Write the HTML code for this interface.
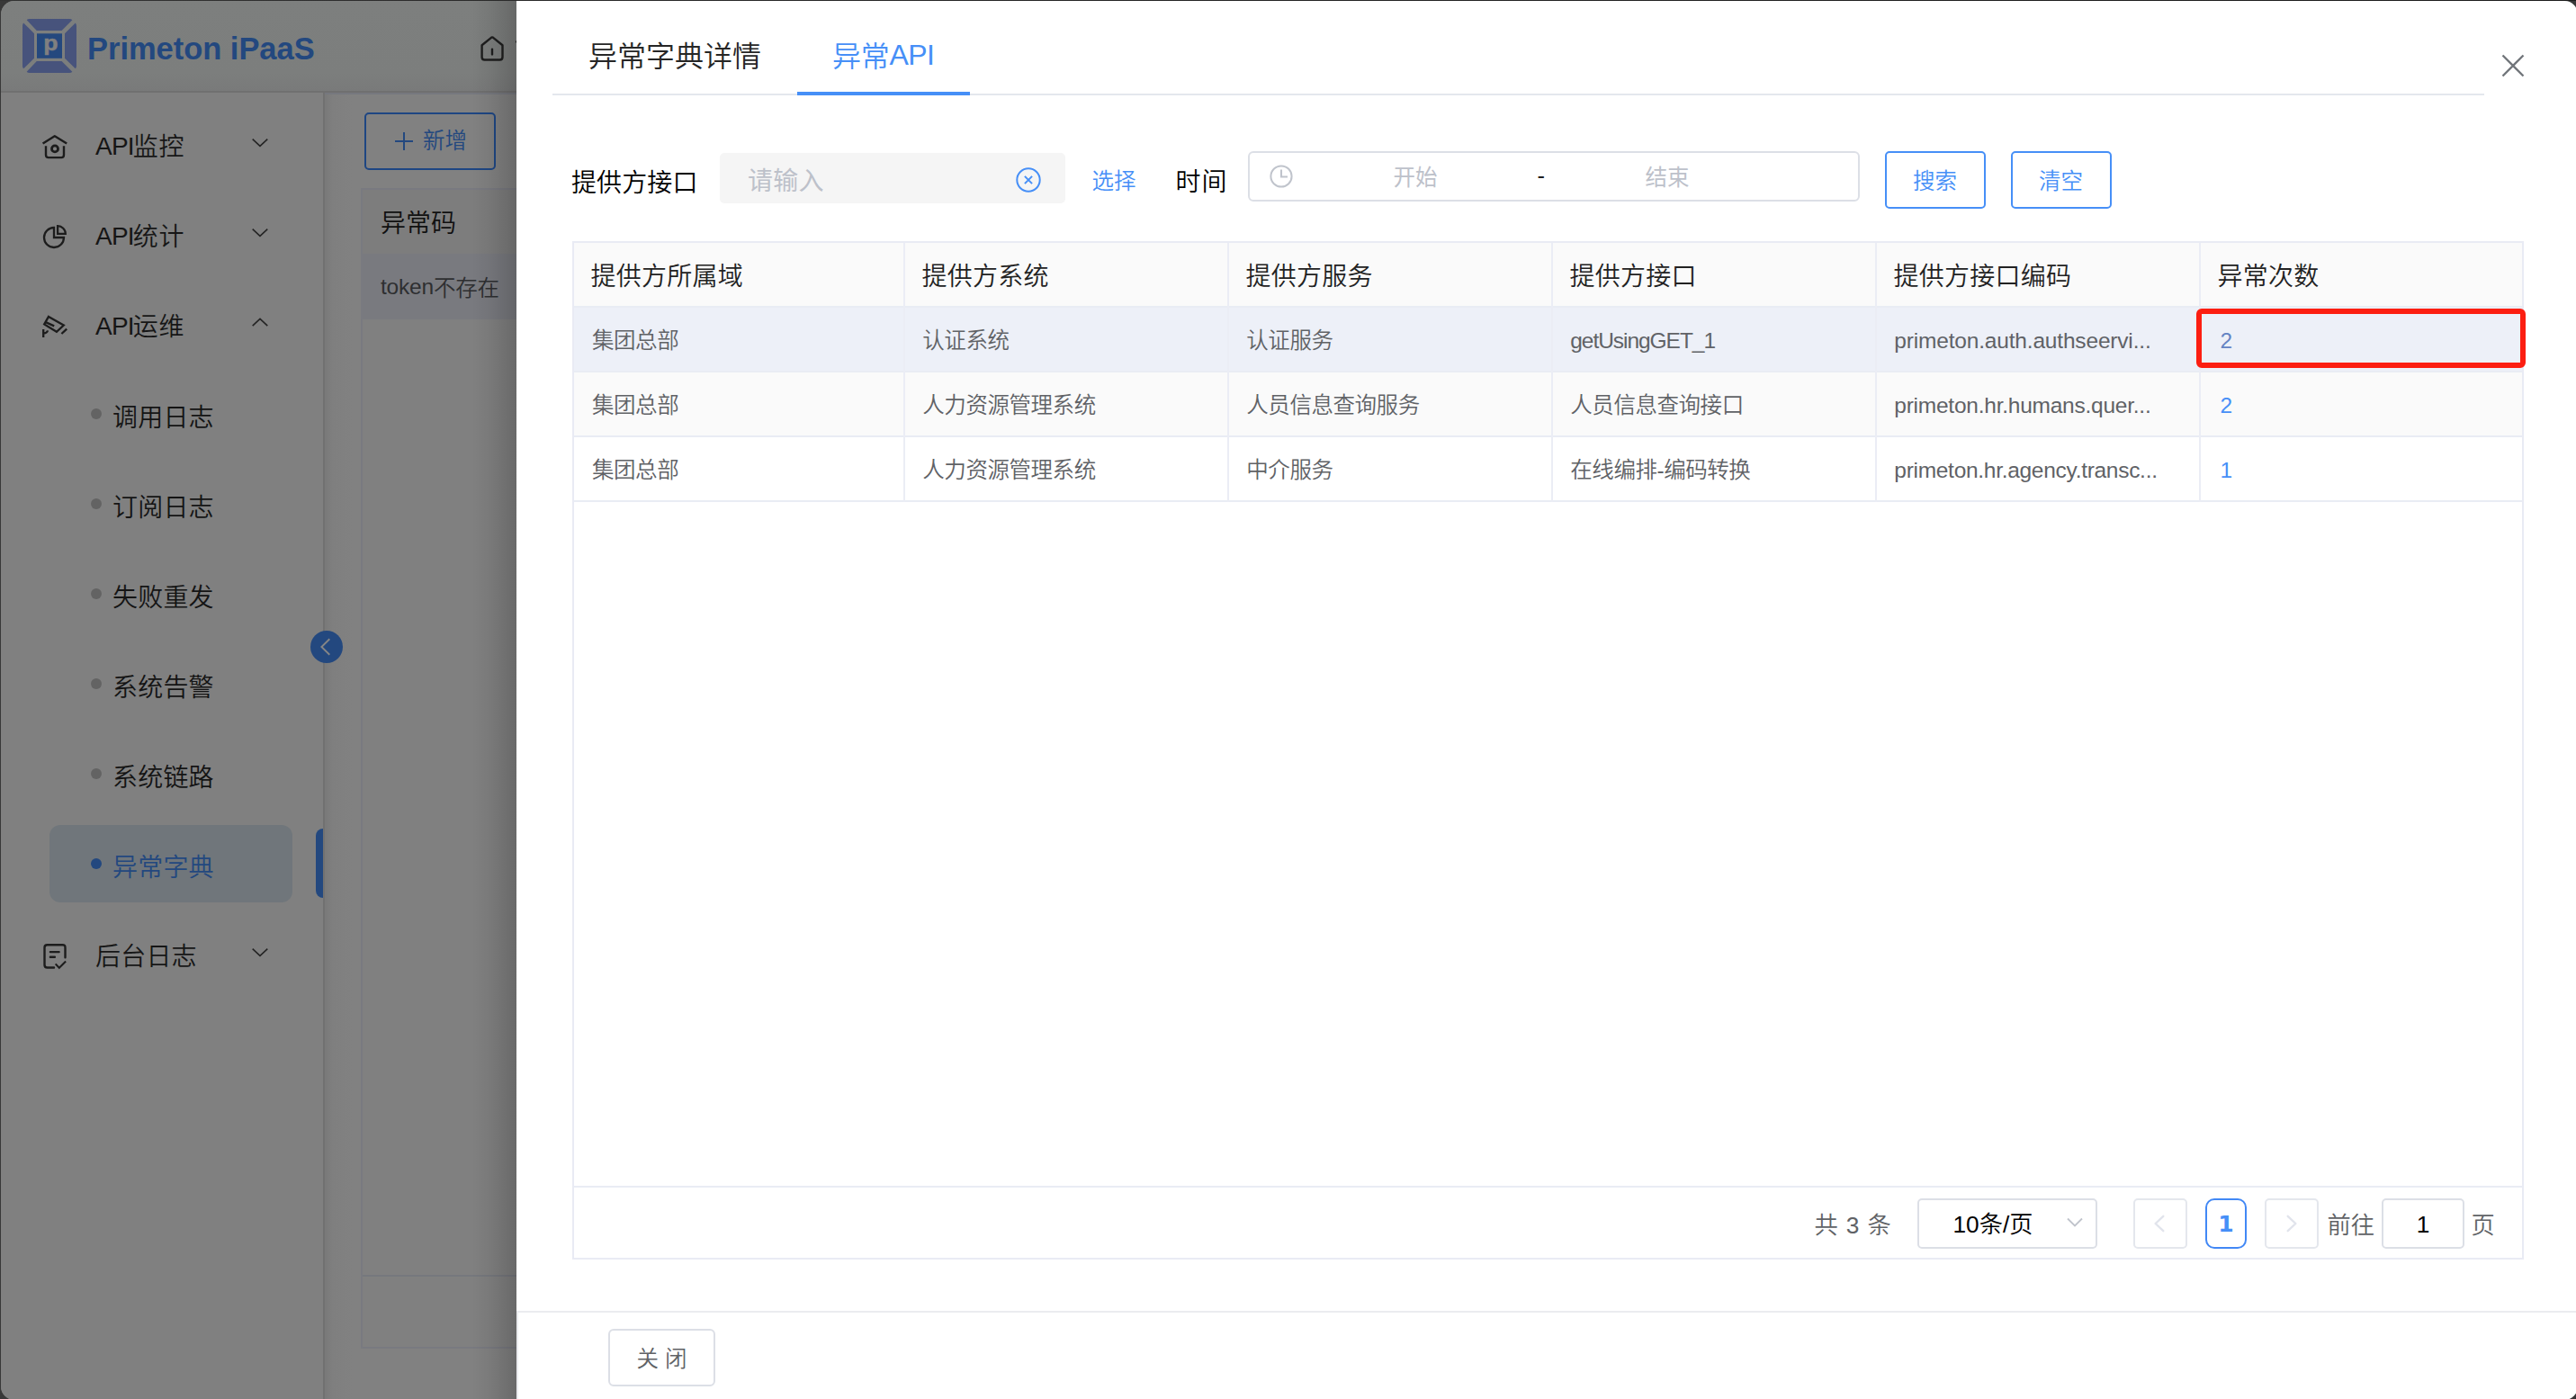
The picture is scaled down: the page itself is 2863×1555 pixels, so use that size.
<!DOCTYPE html>
<html lang="zh-CN">
<head>
<meta charset="utf-8">
<title>Primeton iPaaS</title>
<style>
*{box-sizing:border-box;margin:0;padding:0}
html,body{width:2863px;height:1555px;overflow:hidden;background:#383838}
body{font-family:"Liberation Sans","Noto Sans CJK SC",sans-serif;font-weight:350;position:relative;color:#1f1f1f}
.abs{position:absolute}
.t{position:absolute;white-space:nowrap;line-height:40px;height:40px}
#topline{left:0;top:0;width:2863px;height:1px;background:linear-gradient(90deg,#333 0,#2a2a2a 20%,#1c1c1c 100%)}
#win{left:1px;top:1px;width:2864px;height:1555px;border-radius:15px;overflow:hidden;background:#808080}
#pc{left:-1px;top:-1px;width:0;height:0}
/* ---------- dimmed app (page coordinates) ---------- */
#hdr{left:1px;top:1px;width:2864px;height:100px;background:linear-gradient(#7d7f7e 0,#7c7e7d 80%,#797a7a 100%)}
#hdrline{left:1px;top:101px;width:2864px;height:2px;background:#707070}
#side{left:1px;top:103px;width:358px;height:1460px;background:#808080}
#sideline{left:359px;top:103px;width:2px;height:1460px;background:#717171}
#main{left:361px;top:103px;width:2500px;height:1460px;background:linear-gradient(90deg,#797979 0,#7f7f7f 9px,#818181 30px,#818181 100%)}
#mainline{left:361px;top:103px;width:2500px;height:1.5px;background:#76787e}
#card{left:401px;top:209px;width:2400px;height:1290px;border:2px solid #797a80;background:#808080}
#thead{left:403px;top:211px;width:2400px;height:71px;background:#7d7d7d}
#trow{left:403px;top:282px;width:2400px;height:73px;background:#797a7f}
#tfoot{left:403px;top:1417px;width:2400px;height:2px;background:#76787d}
.m1{font-size:28px;color:#161616;letter-spacing:.7px}
.m2{font-size:28px;color:#141414;letter-spacing:.2px}
.dot{width:12px;height:12px;border-radius:6px;background:#636363}
#act{left:55px;top:917px;width:270px;height:86px;border-radius:12px;background:#70767b}
#actbar{left:351px;top:921px;width:8px;height:77px;border-radius:8px 0 0 8px;background:#23487f}
#collapse{left:345px;top:701px;width:36px;height:36px;border-radius:18px;background:#23487f}
#addbtn{left:405px;top:125px;width:146px;height:64px;border:2px solid #1e4683;border-radius:5px}
#shadow{left:524px;top:0;width:50px;height:1556px;background:linear-gradient(90deg,rgba(0,0,0,0),rgba(0,0,0,.05) 40%,rgba(0,0,0,.18))}
/* ---------- drawer ---------- */
#drawer{left:574px;top:1px;width:2291px;height:1556px;background:#fff}

.blue{color:#468ff7}
#tabline{left:614px;top:104px;width:2147px;height:2px;background:#e4e7ed}
#tabbar{left:886px;top:102px;width:192px;height:4px;background:#468ff7}
#inp{left:800px;top:170px;width:384px;height:56px;border-radius:5px;background:#f5f5f5}
#date{left:1387px;top:168px;width:680px;height:56px;border:2px solid #dcdfe6;border-radius:6px;background:#fff}
.btn{border:2px solid #468ff7;border-radius:5px;background:#fff;width:112px;height:64px}
.ph{color:#bdc1ca;font-weight:400}

#tbl{left:636px;top:268px;width:2169px;height:1132px;border:2px solid #e9ebf4;background:#fff}
.row{left:638px;width:2165px}
.hl{left:638px;width:2165px;height:2px;background:#e9ecf4}
.vl{top:270px;width:2px;height:288px;background:#ebedf5}
.th{font-size:28px;color:#222;letter-spacing:.25px}
.td{font-size:24.5px;color:#606266;letter-spacing:-.45px}
#red{left:2441px;top:343px;width:366px;height:66px;border:6px solid #fc1e11;border-radius:6px}
.pg{font-size:26.25px;color:#606266}
.pbox{top:1332px;height:56px;border:2px solid #e4e7ed;border-radius:5px;background:#fff}
#ftline{left:574px;top:1457px;width:2291px;height:2px;background:#ebecef}
#ftleft{left:574px;top:1457px;width:2px;height:100px;background:#ebecef}
#closebtn{left:676px;top:1477px;width:119px;height:64px;border:2px solid #dcdfe6;border-radius:6px;background:#fff}
.lat{position:relative;top:-1.5px;letter-spacing:-.8px;margin-right:-1px}
</style>
</head>
<body>
<div id="win" class="abs"><div id="pc" class="abs">
  <div id="hdr" class="abs"></div>
  <div id="hdrline" class="abs"></div>
  <div id="side" class="abs"></div>
  <div id="main" class="abs"></div>
  <div id="mainline" class="abs"></div>
  <div id="sideline" class="abs"></div>
  <div id="card" class="abs"></div>
  <div id="thead" class="abs"></div>
  <div id="trow" class="abs"></div>
  <div id="tfoot" class="abs"></div>

  <!-- logo -->
  <svg class="abs" style="left:25px;top:21px" width="60" height="60" viewBox="0 0 60 60">
    <g fill="#47537c">
      <path d="M4.7 1.2 Q5.5 0 8 0 H52 Q54.5 0 55.3 1.2 L43.6 12.9 H15.8 Z"/>
      <path d="M4.7 58.8 Q5.5 60 8 60 H52 Q54.5 60 55.3 58.8 L43.6 47 H15.8 Z"/>
      <path d="M1.2 4.5 Q0 5.5 0 8 V52 Q0 54.5 1.2 55.3 L13 43.8 V16.3 Z"/>
      <path d="M58.8 4.5 Q60 5.5 60 8 V52 Q60 54.5 58.8 55.3 L47 43.8 V16.3 Z"/>
    </g>
    <rect x="16" y="16.3" width="28" height="27.5" fill="#24487e"/>
    <text transform="translate(31.4 35.1) scale(1.13 1)" x="0" y="0" font-family="Liberation Sans, sans-serif" font-weight="700" font-size="23.5" fill="#808080" stroke="#808080" stroke-width=".55" text-anchor="middle">p</text>
  </svg>
  <div class="t" id="brand" style="left:97px;top:34px;font-size:34.5px;font-weight:700;color:#23487f;letter-spacing:-.03px">Primeton iPaaS</div>

  <!-- home icon -->
  <svg class="abs" style="left:532px;top:38px" width="30" height="32" viewBox="0 0 30 32" fill="none" stroke="#1e1e1e" stroke-width="2.4" stroke-linejoin="round" stroke-linecap="round">
    <path d="M3.6 12.2 L14.3 3.6 Q15 3.1 15.8 3.6 L26.5 12.2 V25.5 Q26.5 28.5 23.5 28.5 H6.6 Q3.6 28.5 3.6 25.5 Z"/>
    <path d="M15 16.8 V22.4"/>
  </svg>
  <div class="abs" style="left:572.6px;top:45.4px;width:3px;height:2.8px;border-radius:1.4px;background:#242424"></div>

  <!-- side menu -->
  <svg class="abs" style="left:46px;top:149px" width="30" height="30" viewBox="0 0 30 30" fill="none" stroke="#1c1c1c" stroke-width="2.4" stroke-linejoin="round">
    <path d="M1.6 10.6 L14.8 2.2 L28.2 10.6"/>
    <path d="M5 13.3 V23.3 Q5 26.1 7.8 26.1 H22.2 Q25 26.1 25 23.3 V13.3"/>
    <circle cx="15" cy="16.4" r="3.5" stroke-width="2.8"/>
  </svg>
  <div class="t m1" style="left:106px;top:144px"><span class="lat">API</span>监控</div>
  <svg class="abs arr" style="left:279px;top:153px" width="20" height="12" viewBox="0 0 20 12" fill="none" stroke="#242424" stroke-width="1.6"><path d="M1.7 1.6 L10 9.4 L18.3 1.6"/></svg>

  <svg class="abs" style="left:46px;top:249px" width="30" height="30" viewBox="0 0 30 30" fill="none" stroke="#1c1c1c" stroke-width="2.3" stroke-linejoin="miter">
    <path d="M14 4 A11 11 0 1 0 25 15 H14 Z"/>
    <path d="M18.1 2.2 A8.7 8.7 0 0 1 26.8 10.8 H18.1 Z"/>
  </svg>
  <div class="t m1" style="left:106px;top:244px"><span class="lat">API</span>统计</div>
  <svg class="abs arr" style="left:279px;top:253px" width="20" height="12" viewBox="0 0 20 12" fill="none" stroke="#242424" stroke-width="1.6"><path d="M1.7 1.6 L10 9.4 L18.3 1.6"/></svg>

  <svg class="abs" style="left:46px;top:349px" width="32" height="30" viewBox="0 0 32 30" fill="none" stroke="#1c1c1c" stroke-width="2.3" stroke-linejoin="miter">
    <path d="M8 2.9 L24.8 12.5 L16.9 19.8 L3.2 11.4 Z"/>
    <path d="M4.2 8.9 L14.2 13.4"/>
    <path d="M28.2 16.6 L22.4 22"/>
    <path d="M2.2 17 V26 M2.2 21.6 Q6.6 21 7 18.4"/>
  </svg>
  <div class="t m1" style="left:106px;top:344px"><span class="lat">API</span>运维</div>
  <svg class="abs arr" style="left:279px;top:352px" width="20" height="12" viewBox="0 0 20 12" fill="none" stroke="#242424" stroke-width="1.6"><path d="M1.7 10.2 L10 2.4 L18.3 10.2"/></svg>

  <div class="abs dot" style="left:101px;top:454px"></div><div class="t m2" style="left:125px;top:444.5px">调用日志</div>
  <div class="abs dot" style="left:101px;top:554px"></div><div class="t m2" style="left:125px;top:544.5px">订阅日志</div>
  <div class="abs dot" style="left:101px;top:654px"></div><div class="t m2" style="left:125px;top:644.5px">失败重发</div>
  <div class="abs dot" style="left:101px;top:754px"></div><div class="t m2" style="left:125px;top:744.5px">系统告警</div>
  <div class="abs dot" style="left:101px;top:854px"></div><div class="t m2" style="left:125px;top:844.5px">系统链路</div>
  <div id="act" class="abs"></div>
  <div class="abs dot" style="left:101px;top:954px;background:#23487f"></div><div class="t m2" style="left:125px;top:944.5px;color:#23487f">异常字典</div>
  <div id="actbar" class="abs"></div>

  <svg class="abs" style="left:46px;top:1047px" width="30" height="32" viewBox="0 0 30 32" fill="none" stroke="#1c1c1c" stroke-width="2.4" stroke-linejoin="round" stroke-linecap="round">
    <path d="M26.5 17.3 V6.2 Q26.5 3.2 23.5 3.2 H6.5 Q3.5 3.2 3.5 6.2 V25.5 Q3.5 28.5 6.5 28.5 H14"/>
    <path d="M9.9 11.1 H19.6 M9.9 16.7 H14.9"/>
    <path d="M15.7 24.4 L19.8 28.7 L27.1 21.6" stroke-width="2.1" stroke-linecap="butt" stroke-linejoin="miter"/>
  </svg>
  <div class="t m1" style="left:106px;top:1044px;letter-spacing:.2px">后台日志</div>
  <svg class="abs arr" style="left:279px;top:1053px" width="20" height="12" viewBox="0 0 20 12" fill="none" stroke="#242424" stroke-width="1.6"><path d="M1.7 1.6 L10 9.4 L18.3 1.6"/></svg>

  <div id="collapse" class="abs"></div>
  <svg class="abs" style="left:355px;top:709px" width="14" height="20" viewBox="0 0 14 20" fill="none" stroke="#868686" stroke-width="1.9"><path d="M11.3 1.3 L2.4 10 L11.3 18.7"/></svg>

  <!-- content -->
  <div id="addbtn" class="abs"></div>
  <svg class="abs" style="left:439px;top:147px" width="20" height="20" viewBox="0 0 20 20" stroke="#23487f" stroke-width="2" fill="none"><path d="M10 0 V20 M0 10 H20"/></svg>
  <div class="t" style="left:470px;top:137px;font-size:24.5px;color:#23487f">新增</div>
  <div class="t" style="left:423px;top:229px;font-size:28px;color:#101010">异常码</div>
  <div class="t" style="left:423px;top:300.5px;font-size:24.5px;color:#2e2f31;letter-spacing:-.2px"><span style="position:relative;top:-2px">token</span>不存在</div>

  <div id="shadow" class="abs"></div>

  <!-- drawer -->
  <div id="drawer" class="abs"></div>

  <!-- tabs -->
  <div class="t" style="left:654px;top:42.8px;font-size:32px;color:#262626">异常字典详情</div>
  <div class="t blue" style="left:925px;top:42.8px;font-size:32px;letter-spacing:-.2px">异常<span style="position:relative;top:-1.6px;letter-spacing:-.6px">API</span></div>
  <div id="tabline" class="abs"></div>
  <div id="tabbar" class="abs"></div>
  <svg class="abs" style="left:2779px;top:59px" width="28" height="28" viewBox="0 0 28 28" fill="none" stroke="#72767b" stroke-width="2.4"><path d="M2.5 2.5 L25.5 25.5 M25.5 2.5 L2.5 25.5"/></svg>

  <!-- search form -->
  <div class="t" style="left:635px;top:184px;font-size:28px;color:#000;letter-spacing:.1px">提供方接口</div>
  <div id="inp" class="abs"></div>
  <div class="t ph" style="left:831px;top:181.5px;font-size:28px;letter-spacing:.2px">请输入</div>
  <svg class="abs" style="left:1128px;top:185px" width="30" height="30" viewBox="0 0 30 30" fill="none" stroke="#468ff7" stroke-width="2"><circle cx="15" cy="15" r="12.7"/><path d="M10.9 10.9 L19.1 19.1 M19.1 10.9 L10.9 19.1" stroke-width="2"/></svg>
  <div class="t blue" style="left:1213.5px;top:182px;font-size:24.5px">选择</div>
  <div class="t" style="left:1306.5px;top:183px;font-size:28px;color:#000;letter-spacing:1px">时间</div>
  <div id="date" class="abs"></div>
  <svg class="abs" style="left:1410px;top:182px" width="28" height="28" viewBox="0 0 28 28" fill="none" stroke="#c0c4cc" stroke-width="2"><circle cx="14" cy="14" r="11.6"/><path d="M14 6.5 V14.5 H21" stroke-width="2.1"/></svg>
  <div class="t ph" style="left:1548.5px;top:178px;font-size:24.5px">开始</div>
  <div class="t" style="left:1708.5px;top:175px;font-size:25.5px;color:#1f1f1f;font-weight:400">-</div>
  <div class="t ph" style="left:1828.5px;top:178px;font-size:24.5px">结束</div>
  <div class="abs btn" style="left:2095px;top:168px"></div>
  <div class="t blue" style="left:2126px;top:182px;font-size:24.5px">搜索</div>
  <div class="abs btn" style="left:2235px;top:168px"></div>
  <div class="t blue" style="left:2266px;top:182px;font-size:24.5px">清空</div>
  <div id="tbl" class="abs"></div>
  <div class="abs row" style="top:270px;height:70px;background:#fafafa"></div>
  <div class="abs row" style="top:342px;height:70px;background:#edf0f8"></div>
  <div class="abs row" style="top:414px;height:70px;background:#fafafa"></div>
  <div class="abs hl" style="top:340px"></div>
  <div class="abs hl" style="top:412px"></div>
  <div class="abs hl" style="top:484px"></div>
  <div class="abs hl" style="top:556px"></div>
  <div class="abs vl" style="left:1004px"></div>
  <div class="abs vl" style="left:1364px"></div>
  <div class="abs vl" style="left:1724px"></div>
  <div class="abs vl" style="left:2084px"></div>
  <div class="abs vl" style="left:2444px"></div>
  <div class="t th" style="left:656.5px;top:288px">提供方所属域</div>
  <div class="t th" style="left:1024.5px;top:288px">提供方系统</div>
  <div class="t th" style="left:1384.5px;top:288px">提供方服务</div>
  <div class="t th" style="left:1744.5px;top:288px">提供方接口</div>
  <div class="t th" style="left:2104.5px;top:288px">提供方接口编码</div>
  <div class="t th" style="left:2464.5px;top:288px">异常次数</div>
  <div class="t td" style="left:658px;top:359px">集团总部</div>
  <div class="t td" style="left:1025.3px;top:359px">认证系统</div>
  <div class="t td" style="left:1385.3px;top:359px">认证服务</div>
  <div class="t td" style="left:1745.3px;top:359px;letter-spacing:-1.05px">getUsingGET_1</div>
  <div class="t td" style="left:2105.3px;top:359px;letter-spacing:-.18px">primeton.auth.authseervi...</div>
  <div class="t td" style="left:2467.5px;top:359px;color:#6483c3">2</div>
  <div class="t td" style="left:658px;top:431px">集团总部</div>
  <div class="t td" style="left:1025.3px;top:431px">人力资源管理系统</div>
  <div class="t td" style="left:1385.3px;top:431px">人员信息查询服务</div>
  <div class="t td" style="left:1745.3px;top:431px">人员信息查询接口</div>
  <div class="t td" style="left:2105.3px;top:431px;letter-spacing:-.24px">primeton.hr.humans.quer...</div>
  <div class="t td" style="left:2467.5px;top:431px;color:#468ff7">2</div>
  <div class="t td" style="left:658px;top:503px">集团总部</div>
  <div class="t td" style="left:1025.3px;top:503px">人力资源管理系统</div>
  <div class="t td" style="left:1385.3px;top:503px">中介服务</div>
  <div class="t td" style="left:1745.3px;top:503px">在线编排-编码转换</div>
  <div class="t td" style="left:2105.3px;top:503px;letter-spacing:-.29px">primeton.hr.agency.transc...</div>
  <div class="t td" style="left:2467.5px;top:503px;color:#468ff7">1</div>
  <div id="red" class="abs"></div>
  <div class="abs hl" style="top:1318px"></div>
  <div class="t pg" style="left:2016.5px;top:1342px;word-spacing:1.8px">共 3 条</div>
  <div class="abs pbox" style="left:2131px;width:200px;border-color:#dcdfe6"></div>
  <div class="t" style="left:2170.5px;top:1341px;font-size:26.25px;color:#000">10条/页</div>
  <svg class="abs" style="left:2296px;top:1353px" width="20" height="12" viewBox="0 0 20 12" fill="none" stroke="#c0c4cc" stroke-width="1.8"><path d="M2 1.5 L10 9.5 L18 1.5"/></svg>
  <div class="abs pbox" style="left:2371px;width:60px"></div>
  <svg class="abs" style="left:2393px;top:1349px" width="14" height="22" viewBox="0 0 14 22" fill="none" stroke="#e1e4ec" stroke-width="2.4" stroke-linecap="round" stroke-linejoin="round"><path d="M11.3 2.8 L2.6 11 L11.3 19.2"/></svg>
  <div class="abs pbox" style="left:2451px;width:46px;border-color:#4288f5;border-radius:10px"></div>
  <div class="t blue" style="left:2451px;top:1341px;width:46px;text-align:center;font-size:25px;font-weight:700;font-family:'DejaVu Sans','Liberation Sans',sans-serif">1</div>
  <div class="abs pbox" style="left:2517px;width:60px"></div>
  <svg class="abs" style="left:2540px;top:1349px" width="14" height="22" viewBox="0 0 14 22" fill="none" stroke="#e1e4ec" stroke-width="2.4" stroke-linecap="round" stroke-linejoin="round"><path d="M2.7 2.8 L11.4 11 L2.7 19.2"/></svg>
  <div class="t pg" style="left:2586.5px;top:1342px">前往</div>
  <div class="abs pbox" style="left:2647px;width:92px;border-color:#dcdfe6"></div>
  <div class="t" style="left:2647px;top:1341px;width:92px;text-align:center;font-size:26.25px;color:#000">1</div>
  <div class="t pg" style="left:2746.5px;top:1342px">页</div>
  <div id="ftline" class="abs"></div>
  <div id="ftleft" class="abs"></div>
  <div id="closebtn" class="abs"></div>
  <div class="t td" style="left:707.5px;top:1490.5px;word-spacing:1px">关 闭</div>


</div></div>
<div id="topline" class="abs"></div>
</body>
</html>
